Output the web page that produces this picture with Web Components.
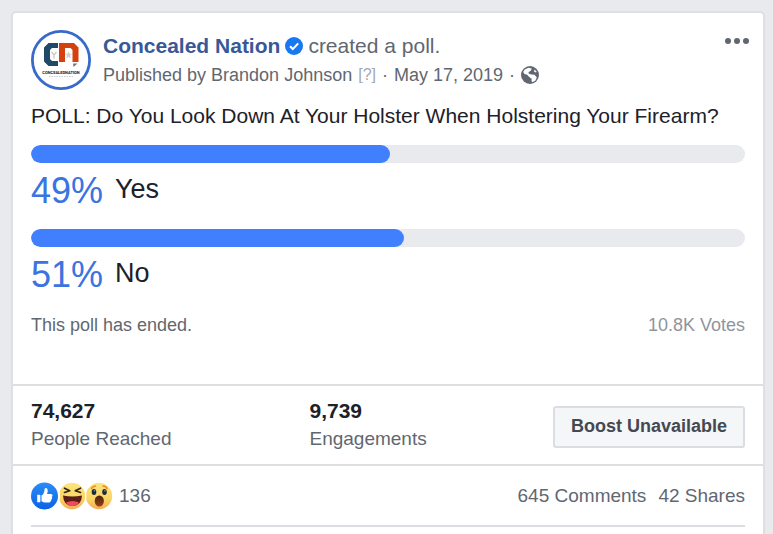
<!DOCTYPE html>
<html lang="en">
<head>
<meta charset="utf-8">
<meta name="viewport" content="width=device-width, initial-scale=1">
<title>Concealed Nation poll</title>
<style>
  body { margin: 0; background: #e9eaed; font-family: "Liberation Sans", Arial, sans-serif; color: #1d2129;
    --line: #dddfe2; --muted: #616770; }
</style>
</head>
<body>
<post-card>
  <post-header slot="header">
    <page-logo slot="avatar"></page-logo>
    <a slot="name" href="#page">Concealed Nation</a>
    <span slot="action">created a poll.</span>
    <span slot="author">Published by Brandon Johnson</span>
    <a slot="date" href="#post">May 17, 2019</a>
  </post-header>
  <poll-box slot="body">
    <span slot="question">POLL: Do You Look Down At Your Holster When Holstering Your Firearm?</span>
    <poll-option percent="49">Yes</poll-option>
    <poll-option percent="51">No</poll-option>
    <span slot="status">This poll has ended.</span>
    <span slot="votes">10.8K Votes</span>
  </poll-box>
  <post-insights slot="insights">
    <stat-item value="74,627">People Reached</stat-item>
    <stat-item value="9,739">Engagements</stat-item>
    <span slot="button">Boost Unavailable</span>
  </post-insights>
  <post-feedback slot="feedback">
    <span slot="count">136</span>
    <a slot="links" href="#comments">645 Comments</a>
    <a slot="links" href="#shares">42 Shares</a>
  </post-feedback>
</post-card>

<script>
const define = (name, html, setup) => {
  const template = document.createElement('template');
  template.innerHTML = html;
  customElements.define(name, class extends HTMLElement {
    constructor() {
      super();
      this.attachShadow({ mode: 'open' }).append(template.content.cloneNode(true));
    }
    connectedCallback() { if (setup) setup(this, this.shadowRoot); }
  });
};

define('post-card', `
<style>
  :host { display: flex; min-height: 100vh; box-sizing: border-box; padding: 11px 8px 0 11px; }
  article { flex: 1; min-width: 0; background: #fff; border: 2px solid var(--line); border-bottom: 0; border-radius: 5px 5px 0 0; }
</style>
<article>
  <slot name="header"></slot><slot name="body"></slot><slot name="insights"></slot><slot name="feedback"></slot>
</article>`);

define('page-logo', `
<style>:host { display: block; width: 60px; height: 60px; } svg { display: block; }</style>
<svg width="60" height="60" viewBox="0 0 60 60" role="img" aria-label="Concealed Nation logo">
  <circle cx="30" cy="30" r="28.6" fill="#fff" stroke="#386ac9" stroke-width="2.8"/>
  <path d="M17.500 13H27v5h-6l-2 2v9l2 2h6v5h-9.500L13 31.500V17.500z" fill="#204967"/>
  <path d="M28 13h15l4.500 4.500V32h-6V20l-2-2h-5.500v14H28z" fill="#d4410f"/>
  <path d="M42 33.500h4.500L42.500 37z" fill="#777"/>
  <path d="M20.500 22l2.500 3 2.500-3M23 25v4" fill="none" stroke="#c9c9c9" stroke-width="1.300"/>
  <path d="M37.500 21l1 2.700h2.500L39 25.500l.9 3-2.400-1.800-2.400 1.800.9-3-2-1.800h2.500z" fill="#cfcfcf"/>
  <text x="30" y="44" text-anchor="middle" font-family="Roboto, Liberation Sans, sans-serif" font-weight="700" font-size="4" fill="#111">CONCEALEDNATION</text>
  <path d="M18 46.500h25" stroke="#ccc" stroke-width="1" stroke-dasharray="1.500 1"/>
</svg>`);

define('post-header', `
<style>
  :host { display: flex; align-items: flex-start; gap: 12px; padding: 17px 18px 0; color: var(--muted); }
  .text { flex: 1; min-width: 0; padding-top: 2px; }
  .title, .meta { display: flex; flex-wrap: wrap; align-items: center; }
  .title { column-gap: 5px; font-size: 21px; line-height: 28px; }
  .meta { column-gap: 6px; font-size: 18px; line-height: 30px; }
  .title svg, .meta svg { display: block; }
  .help { font-size: 16px; color: #a5a9b0; }
  ::slotted(a) { color: inherit; text-decoration: none; }
  ::slotted([slot=name]) { color: #385898; font-weight: 700; }
  button { border: 0; padding: 0; margin: 7px -4px 0 0; background: none; height: 8px; display: flex; }
</style>
<slot name="avatar"></slot>
<div class="text">
  <div class="title"><slot name="name"></slot>
    <svg width="18" height="18" viewBox="0 0 18 18" role="img" aria-label="Verified"><circle cx="9" cy="9" r="9" fill="#1877f2"/><path d="M5 9.300l2.800 2.800 5.400-5.700" fill="none" stroke="#fff" stroke-width="2.100"/></svg>
    <slot name="action"></slot></div>
  <div class="meta"><slot name="author"></slot><span class="help">[?]</span><span>·</span><slot name="date"></slot><span>·</span>
    <svg width="18" height="18" viewBox="0 0 18 18" role="img" aria-label="Public"><circle cx="9" cy="9" r="9" fill="#616770"/><path d="M7.500 1.800l3.200.7-.7 2-2.500 1.700.3 1.600 2.700.700 3 .3 2.300 2.700-1.300 3-3 1.700-1-1.200.2-2.300-2.500-1.800-2-2.200-2.700-.700-1.300-2 1.500-2.500z" fill="#fff"/><path d="M13.500 3.500l2.200 2.300-1 .8-1.700-1z" fill="#fff"/></svg></div>
</div>
<button type="button" aria-label="Post options"><svg width="24" height="8" viewBox="0 0 24 8"><g fill="#616770"><circle cx="3" cy="4" r="3"/><circle cx="12" cy="4" r="3"/><circle cx="21" cy="4" r="3"/></g></svg></button>`);

define('poll-box', `
<style>
  :host { display: block; padding: 11px 18px 47px; }
  .question { margin: 0 0 14px; font-size: 21px; line-height: 30px; font-weight: 400; }
  .options { display: grid; gap: 17px; }
  .foot { display: flex; justify-content: space-between; margin-top: 17px; font-size: 18px; line-height: 24px; color: var(--muted); }
  .votes { color: #90949c; }
</style>
<h2 class="question"><slot name="question"></slot></h2>
<div class="options"><slot></slot></div>
<div class="foot"><slot name="status"></slot><span class="votes"><slot name="votes"></slot></span></div>`);

define('poll-option', `
<style>
  :host { display: block; }
  .track { height: 18px; border-radius: 9px; background: #e9eaed; overflow: hidden; }
  .fill { height: 100%; width: calc(var(--percent) + 9px); border-radius: 9px; background: #4080ff; }
  .label { display: flex; align-items: flex-start; gap: 12px; margin-top: 7px; line-height: 38px; font-size: 27px; }
  .value { line-height: 42px; font-size: 36px; color: #3b73e0; }
</style>
<div class="track" role="progressbar" aria-valuemin="0" aria-valuemax="100"><div class="fill"></div></div>
<div class="label"><span class="value"></span><span><slot></slot></span></div>`, (host, root) => {
  const percent = host.getAttribute('percent');
  root.querySelector('.track').setAttribute('aria-valuenow', percent);
  root.querySelector('.track').setAttribute('aria-label', host.textContent);
  root.querySelector('.fill').style.setProperty('--percent', percent + '%');
  root.querySelector('.value').textContent = percent + '%';
});

define('post-insights', `
<style>
  :host { display: grid; grid-template-columns: 39% 1fr auto; align-items: center; padding: 11px 18px; border: solid var(--line); border-width: 2px 0; }
  .boost { padding-top: 4px; }
  button { display: block; box-sizing: border-box; height: 42px; padding: 0 16px 2px; border: 2px solid #dadde1; border-radius: 3px; background: #f5f6f7; color: #444950; font: 700 18px "Liberation Sans", Arial, sans-serif; }
</style>
<slot></slot>
<div class="boost"><button type="button"><slot name="button"></slot></button></div>`);

define('stat-item', `
<style>
  :host { display: block; line-height: 28px; font-size: 19px; color: var(--muted); }
  strong { display: block; font-size: 21px; color: #1d2129; }
</style>
<strong></strong><slot></slot>`, (host, root) => {
  root.querySelector('strong').textContent = host.getAttribute('value');
});

define('post-feedback', `
<style>
  :host { display: flex; align-items: center; justify-content: space-between; margin: 0 18px; padding: 16px 0 15px; border-bottom: 2px solid #dadde1; font-size: 19px; line-height: 28px; color: var(--muted); }
  .reactions, .links { display: flex; align-items: center; }
  .reactions { gap: 6px; }
  .links { gap: 12px; }
  svg { display: block; }
  ::slotted(a) { color: inherit; text-decoration: none; }
</style>
<div class="reactions">
  <svg width="82" height="28" viewBox="0 0 82 28" role="img" aria-label="Like, Haha, Wow">
    <defs>
      <linearGradient id="blue" x2="0" y2="1"><stop stop-color="#2a8cf8"/><stop offset="1" stop-color="#0c62e6"/></linearGradient>
      <linearGradient id="yellow" x2="0" y2="1"><stop stop-color="#fde57c"/><stop offset=".6" stop-color="#fbd565"/><stop offset="1" stop-color="#f3ae55"/></linearGradient>
      <linearGradient id="mouth" x2="0" y2="1"><stop stop-color="#482314"/><stop offset="1" stop-color="#9a4111"/></linearGradient>
    </defs>
    <circle cx="68" cy="14" r="13.200" fill="url(#yellow)"/>
    <g fill="none" stroke="#e58b24" stroke-width="1.500" stroke-linecap="round"><path d="M60.500 6.500q1.500-2.500 4-2.500M72 4q3 0 4 2.500"/></g>
    <ellipse cx="63" cy="10" rx="2.300" ry="2.900" fill="#1d2939"/><ellipse cx="73.500" cy="10" rx="2.300" ry="2.900" fill="#1d2939"/>
    <circle cx="63.500" cy="8.800" r=".8" fill="#8aa1b8"/><circle cx="74" cy="8.800" r=".8" fill="#8aa1b8"/>
    <ellipse cx="68.300" cy="19" rx="4.600" ry="5.600" fill="url(#mouth)"/>
    <circle cx="41" cy="14" r="14.500" fill="#fff"/><circle cx="41" cy="14" r="13.200" fill="url(#yellow)"/>
    <path d="M33.500 6.200l5.200 2.600-5.200 1.700M49.500 6.200l-5.200 2.600 5.200 1.700" fill="none" stroke="#30251c" stroke-width="1.700" stroke-linecap="round" stroke-linejoin="round"/>
    <path d="M32 13.500q9.500 2 19 0-.5 10.500-9.500 10.500T32 13.500z" fill="#5a1c16"/>
    <path d="M35 20.600q6.500-3.200 13 0Q45.500 24 41.500 24T35 20.600z" fill="#f24a60"/>
    <circle cx="14" cy="14" r="15" fill="#fff"/><circle cx="13.500" cy="14" r="13.500" fill="url(#blue)"/>
    <path d="M6.200 12.700h2.500q.7 0 .7.700v6.200q0 .7-.7.700H6.200z" fill="#fff"/>
    <path d="M10.500 13.500q3-2 3-5.800 0-1.700 1.200-1.700 2 0 2 3 0 1.500-.7 3h4q1.600.1 1.500 1.500 0 .9-.8 1.200.6.500.5 1.200-.1.800-.9 1.100.4.500.2 1.100-.2.700-.9.900.1 1.500-1.700 1.500h-3.800q-1.700 0-3.600-1.200z" fill="#fff"/>
  </svg>
  <slot name="count"></slot>
</div>
<div class="links"><slot name="links"></slot></div>`);
</script>
</body>
</html>
